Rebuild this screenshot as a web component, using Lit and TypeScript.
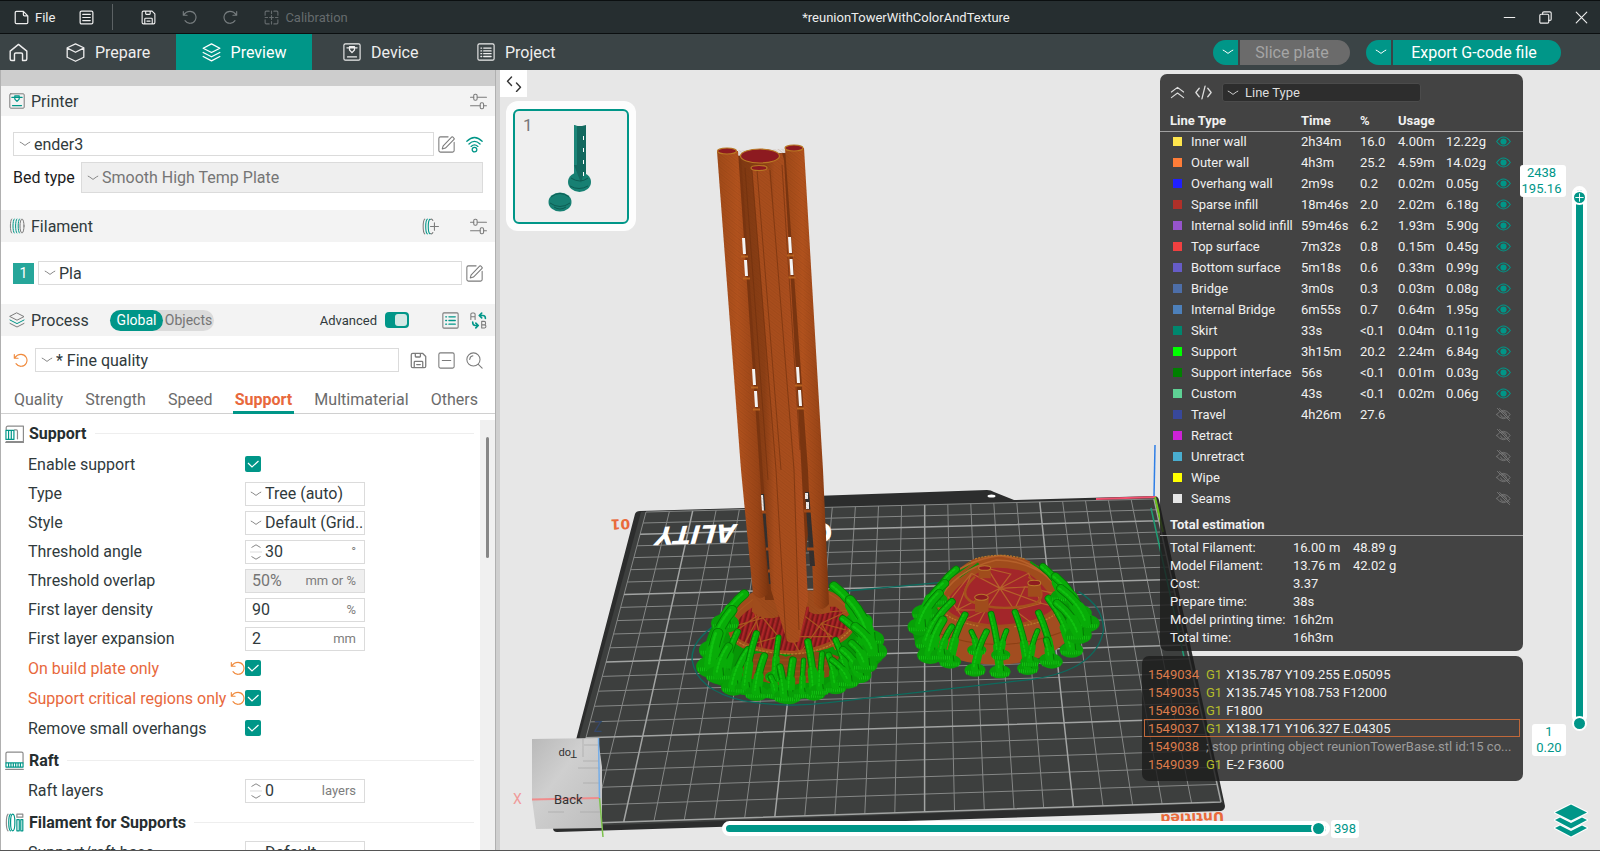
import { LitElement, html, svg, css, nothing } from "lit";
import { customElement, state } from "lit/decorators.js";
import { classMap } from "lit/directives/class-map.js";
import { styleMap } from "lit/directives/style-map.js";

/* ---------- icons ---------- */

const icon = (size: number, body: unknown, box = 16) =>
  html`<svg class="icon" width=${size} height=${size} viewBox="0 0 ${box} ${box}" fill="none" stroke="currentColor" stroke-width="1" stroke-linecap="round" stroke-linejoin="round" aria-hidden="true">${body}</svg>`;

const I = {
  file: svg`<path stroke-width="1.3" d="M2.5 1.5h6.5M1.3 3v10.2q0 1.3 1.3 1.3h10.8q1.3 0 1.3-1.3V6.3L10 1.5H2.6Q1.3 1.5 1.3 3M10 1.5v3.6q0 1.2 1.2 1.2h3.5"/>`,
  menu: svg`<rect x="1.2" y="1.2" width="13.6" height="13.6" rx="1.5" stroke-width="1.3"/><path stroke-width="1.3" d="M4 4.7h8M4 8h8M4 11.3h8"/>`,
  save: svg`<path stroke-width="1.2" d="M1.2 2.6q0-1.4 1.4-1.4h9.2l3 3v9.2q0 1.4-1.4 1.4H2.6q-1.4 0-1.4-1.4zM4 14.8V9.6q0-.8.8-.8h6.4q.8 0 .8.8v5.2M5 1.2v2.9q0 .6.6.6h3.6q.6 0 .6-.6V1.2M6.3 11.8h3.4"/>`,
  undo: svg`<path stroke-width="1.2" d="M1.4 1.6v4h4M1.8 5.4C3.6 2.4 6.2 1.4 8.6 1.4a6.4 6.4 0 1 1-5.4 10"/>`,
  redo: svg`<path stroke-width="1.2" d="M14.6 1.6v4h-4M14.2 5.4C12.4 2.4 9.8 1.4 7.4 1.4a6.4 6.4 0 1 0 5.4 10"/>`,
  calib: svg`<path stroke-width="1.2" d="M1.2 5.5V2.4q0-1.2 1.2-1.2h3.1M10.5 1.2h3.1q1.2 0 1.2 1.2v3.1M14.8 10.5v3.1q0 1.2-1.2 1.2h-3.1M5.500 14.800H2.400q-1.200 0-1.200-1.200v-3.100M8 1.200v2.600M8 12.200v2.600M1.200 8h2.600M12.200 8h2.600M8 6v4M6 8h4"/>`,
  home: svg`<path stroke-width="1.2" d="M1 6.800 8 1.200l7 5.600v6.600q0 1.300-1.300 1.300h-2.300V9.600q0-1.200-1.200-1.200H5.800q-1.200 0-1.200 1.200v5.100H2.300Q1 14.700 1 13.400z"/>`,
  cube: svg`<path stroke-width="1.1" d="M8 .8 15 4v8l-7 3.400L1 12V4zM1.200 4.300 8 7.800l6.800-3.500"/>`,
  layers: svg`<path stroke-width="1.1" d="M8 .8 15 4.400 8 8 1 4.400zM1 8l7 3.600L15 8M1 11.400 8 15l7-3.600"/>`,
  printer: svg`<rect x=".8" y=".8" width="14.400" height="14.400" rx="1.300"/><path stroke-width="1.1" d="M3.500 4.300h9M5.800 3.200h4.400v3L8 8.600 5.800 6.200zM4 12.400h8"/>`,
  list: svg`<rect x=".8" y=".8" width="14.400" height="14.400" rx="1.300"/><path stroke-width="1.200" d="M3.500 4.500h.6M6 4.500h6.500M3.500 7h.6M6 7h6.500M3.500 9.500h.6M6 9.500h6.500M3.500 12h.6M6 12h6.500"/>`,
  printerDuo: svg`<rect x=".8" y=".8" width="14.400" height="14.400" rx="1"/><g stroke="#009688" stroke-width="1.200"><path d="M2.800 4.300h10.400M5.800 2.800h4.400v3.300L8 8.400 5.800 6.100zM3.500 12.600h9"/></g>`,
  sliders: svg`<path d="M.5 4h3M7 4h8.500M.5 12h9M13 12h2.500"/><rect x="3.500" y="1.200" width="3.200" height="5.600" rx="1.300"/><rect x="9.600" y="9.200" width="3.200" height="5.600" rx="1.300"/>`,
  spool: svg`<path d="M2.600 1C.9 2.600.9 13.400 2.600 15"/><g stroke="#009688"><path d="M5.200 1C3.500 2.600 3.500 13.400 5.200 15M7.800 1C6.100 2.600 6.100 13.400 7.800 15M10.400 1C8.700 2.600 8.700 13.400 10.400 15"/></g><ellipse cx="13" cy="8" rx="2" ry="7"/>`,
  spoolAdd: svg`<path d="M2.600 1C.6 2.600.6 13.400 2.600 15M8 1.300q1.300-.8 2.200 1M8 14.700q1.300.8 2.200-1M8 8h7.500M11.700 4.500v7"/><path stroke="#009688" d="M5 1C3 2.600 3 13.400 5 15M7.400 1.200C5.400 2.600 5.400 13.400 7.400 14.800"/>`,
  edit: svg`<path d="M9.500.8H2.300Q.8.800.8 2.300v11.400q0 1.500 1.500 1.500h11.400q1.500 0 1.500-1.500V6M13.800.9l1.300 1.300q.5.500 0 1L7 11.300l-3 .9.900-3L13 .9q.4-.4.800 0z"/>`,
  wifi: svg`<g stroke="#009688" stroke-width="1.200"><path d="M.8 5Q8-2.200 15.200 5M2.800 7.500q5.200-5 10.400 0M4.800 9.800q3.200-3 6.400 0"/><circle cx="8" cy="12.800" r="2.200"/></g>`,
  processDuo: svg`<path d="M8 1 15 4.600 8 8.200 1 4.600z"/><path stroke="#009688" d="m1 8 7 3.600L15 8"/><path d="m1 11.400 7 3.600 7-3.600"/>`,
  listDuo: svg`<rect x=".8" y=".8" width="14.400" height="14.400" rx="1"/><path stroke="#009688" stroke-width="1.200" d="M3.500 4.500h.8M6.500 4.500h6M3.500 8h.8M6.500 8h6M3.500 11.500h.8M6.500 11.500h6"/>`,
  swap: svg`<path d="M.8 7V2.200Q.8 1 2 1h1.600q1.200 0 1.200 1.200V7M.8 4.400h4M11 8.800v6.200h2.800q1.200 0 1.200-1.500 0-1.400-1.400-1.400H11h2.400q1.300 0 1.300-1.600 0-1.700-1.300-1.700z"/><path stroke="#009688" stroke-width="1.500" d="M9 3.300h3.200Q14.500 3.300 14.500 6M11 1 8.700 3.300 11 5.500M2.500 9.500q0 3.200 2.500 3.200h2.300M5.500 10.500l2.300 2.200-2.300 2.300"/>`,
  minusBox: svg`<rect x=".8" y=".8" width="14.400" height="14.400" rx="1.500"/><path d="M4 8h8"/>`,
  search: svg`<circle cx="7" cy="7" r="6.200"/><path d="m11.600 11.600 3.600 3.600M3.500 7q.2-3 3-3.500"/>`,
  supportSec: svg`<path d="M1 14.800h14.500v-13H2.500Q1 1.800 1 3.300v1.500M10.500 12.500V6q0-1-1-1H8M.6 15.500h15" /><path stroke="#009688" d="M.8 13V5.400h6.700V13zM3 5.400V13M5.300 5.400V13"/>`,
  raftSec: svg`<path d="M.8 9.800V2.200Q.8 1 2 1h12q1.200 0 1.200 1.200v7.600M.6 15.500h14.800"/><path stroke="#009688" d="M.8 10h14.400v3.500H.8zM3 10v3.500M5 10v3.500M7 10v3.500M9 10v3.500M11 10v3.500M13 10v3.500"/>`,
  filSec: svg`<path d="M2.500 1C.7 2.600.7 13.400 2.500 15M10 1h5v2.500h-5z"/><g stroke="#009688"><path d="M4.500 1C2.700 2.600 2.700 13.400 4.500 15"/><ellipse cx="6.500" cy="8" rx="1.800" ry="7"/><path d="M10 5.500h2V15h-2zM13.300 5.500H15V15h-1.700z"/></g>`,
  min: svg`<path stroke-width="1.300" d="M1.500 8h13"/>`,
  restore: svg`<rect x="1" y="4" width="11" height="11" rx="1.500" stroke-width="1.400"/><path stroke-width="1.400" d="M4.500 4V2.500Q4.500 1 6 1h7.500Q15 1 15 2.500V10q0 1.500-1.500 1.500H12"/>`,
  close: svg`<path stroke-width="1.400" d="m1.500 1.500 13 13M14.500 1.500l-13 13"/>`,
  collapse: svg`<path stroke-width="1.200" d="m1.500 7.500 6.500-5 6.500 5M1.500 13.500l6.500-5 6.500 5"/>`,
  code: svg`<path stroke-width="1.200" d="M4 4 .8 8 4 12M12 4l3.200 4-3.200 4M9.500 2l-3 12"/>`,
  eye: svg`<path stroke-width="1.100" d="M.7 8Q8-1.500 15.300 8 8 17.500.7 8z"/><circle cx="8" cy="8" r="3.300" fill="currentColor" stroke="none"/>`,
  eyeOff: svg`<path d="M.7 8Q8-1 15.300 8 8 17 .7 8zM1.500 1.500l13 13M5 8.500a3 3 0 0 0 4 2.500M6 5.500a3.200 3.200 0 0 1 5 3M3.800 1.500l10.700 10.700"/>`,
  fold: svg`<path stroke-width="1.400" stroke="#333" d="M5.500 1 1.500 5.300l4 4.200M10.500 7l4 4.200-4 4.300"/>`,
};

const chevron = html`<svg class="chev" width="12" height="6" viewBox="0 0 12 6" fill="none" stroke="currentColor" aria-hidden="true"><path d="M.8 1 Q2 1.300 6 4.400Q10 1.300 11.200 1"/></svg>`;
const spin = html`<svg class="spin" width="12" height="18" viewBox="0 0 12 18" fill="none" stroke="#888" aria-hidden="true"><path d="M1.500 4.500 6 1.800l4.500 2.700M1.500 13.500 6 16.200l4.500-2.700"/><path stroke="#ddd" d="M0 9h12"/></svg>`;

/* ---------- bed projection ---------- */

type P = [number, number];
const [A, B, C, D]: P[] = [[646, 512], [1154, 499], [1221, 802], [563, 824]];
const H = (() => {
  const dx1 = B[0] - C[0], dx2 = D[0] - C[0], sx = A[0] - B[0] + C[0] - D[0];
  const dy1 = B[1] - C[1], dy2 = D[1] - C[1], sy = A[1] - B[1] + C[1] - D[1];
  const det = dx1 * dy2 - dx2 * dy1;
  const g = (sx * dy2 - dx2 * sy) / det, h = (dx1 * sy - sx * dy1) / det;
  return { a: B[0] - A[0] + g * B[0], b: D[0] - A[0] + h * D[0], d: B[1] - A[1] + g * B[1], e: D[1] - A[1] + h * D[1], g, h };
})();
const onBed = (u: number, v: number): string => {
  const w = H.g * u + H.h * v + 1;
  return `${((H.a * u + H.b * v + A[0]) / w).toFixed(1)} ${((H.d * u + H.e * v + A[1]) / w).toFixed(1)}`;
};
const CELLS = 22;
const gridPath = (major: boolean) => {
  let d = "";
  for (let i = 0; i <= CELLS; i++) {
    const t = i / CELLS;
    if ((i % 5 === 2) === major) d += `M${onBed(t, 0)}L${onBed(t, 1)}`;
    if ((i % 5 === 2) === major) d += `M${onBed(0, t)}L${onBed(1, t)}`;
  }
  return d;
};

/* ---------- printed models ---------- */

type Trunk = [number, number, number, number, number];
const TREES_TOWER: Trunk[] = [
  [404, 402, 350, 480, 26], [370, 450, 318, 560, 28], [330, 520, 312, 610, 30], [655, 378, 725, 475, 26], [700, 420, 755, 530, 28],
  [680, 476, 758, 575, 20], [715, 500, 765, 565, 26], [385, 515, 352, 635, 18], [360, 560, 332, 635, 24], [415, 570, 374, 672, 22], [438, 520, 408, 675, 18],
  [460, 588, 438, 690, 20], [500, 532, 490, 640, 15], [478, 650, 492, 690, 16], [540, 600, 530, 700, 20], [504, 620, 516, 700, 18], [582, 545, 600, 690, 19],
  [622, 580, 616, 680, 15], [570, 600, 566, 690, 13], [640, 585, 660, 672, 18], [660, 540, 690, 648, 17], [680, 570, 725, 635, 22], [705, 550, 742, 605, 22], [650, 600, 695, 655, 18],
];
const TREES_DOME: Trunk[] = [
  [997, 328, 940, 410, 20], [965, 370, 910, 450, 24], [950, 400, 898, 490, 24], [985, 425, 915, 540, 20], [960, 480, 925, 575, 24],
  [1022, 464, 980, 595, 18], [985, 500, 955, 575, 17], [1040, 515, 1055, 560, 14], [1082, 515, 1050, 620, 17], [1095, 462, 1120, 625, 17], [1138, 512, 1122, 575, 14],
  [1162, 456, 1198, 615, 17], [1225, 512, 1204, 595, 14], [1228, 458, 1265, 595, 18], [1250, 540, 1260, 590, 18], [1256, 415, 1320, 560, 20],
  [1240, 320, 1295, 400, 20], [1275, 350, 1340, 450, 24], [1290, 385, 1362, 480, 24], [1280, 430, 1340, 515, 24],
];
const bend = ([x1, y1, x2, y2]: Trunk, dx = 0) =>
  `M${x1 + dx} ${y1}Q${x1 + (x2 - x1) * 0.75 + dx} ${y1 + (y2 - y1) * 0.45} ${x2 + dx} ${y2}`;
const trees = (list: Trunk[]) => list.map((t) => {
  const [x1, y1, x2, y2, w] = t;
  const mx = x1 + (x2 - x1) * 0.7, my = y1 + (y2 - y1) * 0.6;
  return svg`
  <ellipse cx=${x2} cy=${y2 + 10} rx=${w + 13} ry=${w + 3} fill="#08a008"/>
  <path d="M${x2 - w - 8} ${y2 + 18}h${2 * w + 16}" stroke="#16cc16" stroke-width="11" stroke-dasharray="2 4"/>
  <path d=${bend(t)} stroke="#057805" stroke-width=${w + 2} stroke-linecap="round"/>
  <path d=${bend(t)} stroke="#08ac08" stroke-width=${w - 3} stroke-linecap="round"/>
  <path d="M${mx} ${my}L${x2} ${y2 + 4}" stroke="#08ac08" stroke-width=${w * 1.4} stroke-linecap="round"/>
  <path d=${bend(t, -w / 5)} stroke="#10c210" stroke-width=${w / 4} stroke-linecap="round" stroke-dasharray="7 6"/>
  <path d="M${x2 + w / 2} ${y2 - w / 2}l2 ${w}" stroke="#057a05" stroke-width="3"/>`;
});

const slits: [number, number][] = [[742, 238], [744, 260], [788, 237], [789.500, 259], [752, 369], [754, 391], [796, 367], [798, 390]];

const scene = svg`
  <defs>
    <linearGradient id="post" x1="0" x2="1" y1="0" y2="0"><stop offset="0" stop-color="#a04a18"/><stop offset=".4" stop-color="#b3531e"/><stop offset=".8" stop-color="#9a4517"/><stop offset="1" stop-color="#7d3610"/></linearGradient>
    <linearGradient id="core" x1="0" x2="1" y1="0" y2="0"><stop offset="0" stop-color="#7f3912"/><stop offset=".35" stop-color="#8c3f15"/><stop offset=".5" stop-color="#a94e1d"/><stop offset="1" stop-color="#b05020"/></linearGradient>
    <linearGradient id="cube" x1="0" x2="1" y1="0" y2="1"><stop offset="0" stop-color="#b9b9b9"/><stop offset=".4" stop-color="#cfcfcf"/><stop offset="1" stop-color="#bdbdbd"/></linearGradient>
    <pattern id="grain" width="5" height="5" patternUnits="userSpaceOnUse" patternTransform="rotate(38)"><path d="M0 1h5M0 3.500h5" stroke="#6f300e" stroke-opacity=".22" stroke-width=".8"/></pattern>
    <pattern id="infill" width="13" height="40" patternUnits="userSpaceOnUse" patternTransform="rotate(14)"><path fill="#9d1f22" d="M0 0h13v40H0z"/><path d="M3 0v40" stroke="#6e1414" stroke-width="4"/><path d="M9 0v40" stroke="#bb2a2c" stroke-width="2"/></pattern>
  </defs>

  <path fill="#2c2d2d" d="M812 506 814 496 987 490Q991 490 994 492L1014 500 1154 496Q1158 496 1159 500L1225 806Q1225 810 1221 811L557 832Q553 832 553 828L635 514Q636 511 640 511z"/>
  <path fill="#3d3f3e" d="M641 512 1154 498 1223 803 555 827z"/>
  <ellipse cx="991.500" cy="496" rx="4" ry="1.600" fill="#fff"/>
  <path d=${gridPath(false)} stroke="#858786" stroke-width="1" fill="none"/>
  <path d=${gridPath(true)} stroke="#a2a4a3" stroke-width="1.500" fill="none"/>
  <path d="M1155 445 1154 497" stroke="#2f7fe6" stroke-width="1.500"/>
  <path d="M1096 499 1156 497" stroke="#f0506e" stroke-width="1.800"/>
  <path d="M1155 497 1163 532" stroke="#6fc21e" stroke-width="2"/>
  <path d="M1151 508 1184 657" stroke="#1f9d74" stroke-width="1.500"/>
  <g fill="#fff" class="bedmark">
    <text transform="translate(738 524) rotate(178) skewX(-18)">ALITY</text>
    <text transform="translate(832 523) rotate(178)">C</text>
  </g>
  <g fill="#e96a3b" class="platelabel">
    <text transform="translate(630 519) rotate(178)">01</text>
    <text transform="translate(1224 812) rotate(178)">Untitled</text>
  </g>

  <g transform="translate(600 460) scale(.35714 .33333)" fill="none">
    <path d="M330 490Q255 540 258 600 270 690 400 722 520 745 640 728L1210 658Q1390 630 1410 510 1410 440 1340 395M660 396 950 368" stroke="#0d6b5e" stroke-width="4"/>
    <path fill="#079607" d="M404 392Q325 450 298 540L288 610 320 670 420 710 520 720 640 700 735 655 790 600 785 550 745 465 655 368 560 500z"/>
    <path fill="#8a4517" d="M385 600Q460 560 520 590 600 560 670 590L640 650 520 680 400 650z"/>
    <g stroke="#9b4a1a" stroke-width="5"><path d="M395 600h270M410 618h240M430 634h200M445 650h180M470 666h120"/></g>
    <path fill="#a04c1c" d="M440 390Q380 420 356 480 352 540 400 565 540 600 640 565 710 540 722 480 690 410 640 392z"/>
    <path fill="url(#infill)" d="M430 440Q380 470 372 520 400 560 520 575 640 565 692 510 700 470 660 440z"/>
    <g stroke="#a9561f" stroke-width="3.500"><path d="M372 520 450 460 400 560 500 530 430 440 455 570 545 575M372 500 500 460 560 580 620 490 690 510M600 460 700 450 620 490 660 570M575 470 650 530 560 530M360 480Q400 440 450 400M720 480Q690 430 640 400"/></g>
    <path stroke="#b8772b" stroke-width="4" stroke-dasharray="7 3" d="M366 530Q420 580 540 582 650 575 705 505"/>
    <path fill="#a04c1c" d="M430 395Q470 380 500 395L500 470Q460 485 425 455zM585 400 640 395 645 455Q610 470 585 455z"/>
    ${trees(TREES_TOWER)}

    <path fill="#079607" d="M1000 322Q930 380 885 460L872 500 885 560 920 590 965 520 960 470 1010 380zM1240 312 1335 420 1385 490 1372 520 1340 560 1290 500z"/>
    <path fill="#a24d20" d="M955 470 930 560Q990 612 1110 614 1240 612 1305 545L1290 460z"/>
    <path stroke="#8b3f14" stroke-width="3" d="M948 520Q1110 590 1296 515M975 590 995 530M1060 610 1050 550M1180 610 1190 545M1270 580 1245 530"/>
    <path fill="#a04c1c" d="M1045 298Q960 350 940 430 945 490 1120 503 1290 490 1300 430 1270 330 1190 298 1120 275 1045 298z"/>
    <path stroke="#0b8f0b" stroke-width="6" d="M985 350 1040 308M1005 352 1060 310M1205 305 1260 350"/>
    <path fill="#a3262a" d="M1085 325Q990 370 965 440 1000 490 1120 494 1230 490 1275 440 1250 370 1190 335 1130 318 1085 325z"/>
    <g stroke="#b5602a" stroke-width="3.500"><path d="M965 440 1040 340 1000 450 1120 385 1085 325 1150 342 1120 385 1200 340 1235 430 1275 440M1120 385 1235 430 1160 450 1120 385 1080 450 1000 450M1040 340 1120 385 1210 380M1160 450 1210 490M1080 450 1060 490M975 410 1020 480 1080 450M1270 400 1190 380 1160 450"/><path d="M1050 350Q1000 400 1040 425 1120 460 1220 430 1260 400 1200 350" stroke="#a5521d" stroke-width="7"/><path stroke-width="5" d="M960 370Q1020 300 1120 287 1230 300 1290 400M945 430Q990 330 1110 300 1200 300 1280 370"/></g>
    <path stroke="#b8772b" stroke-width="4" stroke-dasharray="6 3" d="M942 430Q960 480 1060 498M1160 500Q1270 490 1300 432M1050 297Q1120 275 1190 297"/>
    <g fill="#a04c1c"><path d="M1050 412v45h38v-45zM1198 370v40h36v-40zM1060 325v30h34v-30z"/></g>
    <g fill="#8f1c20" stroke="#b8772b" stroke-width="3"><ellipse cx="1068" cy="412" rx="19" ry="9"/><ellipse cx="1216" cy="369" rx="18" ry="8"/><ellipse cx="1077" cy="324" rx="17" ry="7"/></g>
    ${trees(TREES_DOME)}
  </g>

  <path fill="#7a3510" d="M733 156 800 152 812 500 800 600 765 600z"/>
  <path fill="url(#post)" d="M717 151 738 151 768 594Q760 602 753 594L741 470z"/>
  <path fill="url(#post)" d="M785 148 804 148 823 470 829 604Q821 614 814 604L808 470z"/>
  <path fill="#2f2f30" d="M761 494l3 0 8 90-3 0zM805 492l4 0 6 74-5 0z"/>
  <path fill="#f2f2f2" d="M761 495h2l1 16h-2zM805 493h3v6h-3zM806 502h3v7h-3z"/>
  <g stroke="#a34b18" stroke-width="3"><path d="M762 512h7M804 511h8M766 549h6M807 549h8M768 571h6"/></g>
  <path fill="url(#core)" d="M741 155Q760 166 782 153L784 160 801 460 808 600 799 641Q793 644 787 641L771 590 762 460z"/>
  <path fill="#a94e1d" d="M752 169 769 169 795 470 799 641Q793 644 787 641L776 470z"/>
  <g fill="none" stroke="#6d2f0d" stroke-opacity=".6"><path d="M752 170 776 470 786 640M757 170 781 470M770 170 794 470 799 630M782 165 800 450M745 168 768 480"/></g>
  <path fill="url(#grain)" d="M717 151 804 148 823 470 829 604 799 641 787 641 753 594 741 470z"/>
  <g fill="#8d1a20" stroke="#b87824" stroke-width="1.200"><ellipse cx="727" cy="151" rx="9.500" ry="3"/><ellipse cx="760" cy="156" rx="19.500" ry="7"/><ellipse cx="794" cy="148" rx="9" ry="3"/><ellipse cx="759" cy="168" rx="8" ry="2.500"/></g>
  ${slits.map(([x, y]) => svg`<path fill="#f4f4f4" d="M${x} ${y}h3l1 16h-3z"/><path d="M${x - 1} ${y + 18.500}h7" stroke="#b8631f" stroke-width="2"/>`)}

  <path fill="url(#cube)" d="M532 739 598 738 602 767V828L536 829 532 799z"/>
  <path stroke="#a8a8a8" stroke-width=".7" d="M583 739v18M583 761h16M578 768h22M583 783h17M548 812h16M580 812h20M598 745h-14"/>
  <path stroke="#f08c8c" stroke-width="2" d="M532 799.500 599 798"/>
  <path stroke="#76aee8" stroke-width="1.500" d="M598.500 738 599.500 798"/>
  <path stroke="#7cc24c" stroke-width="1.500" d="M599.500 798 603 837"/>
  <g class="axis"><text x="513" y="804" fill="#f09a9a">X</text><text x="594" y="732" fill="#33476b">Z</text></g>
  <g class="face" fill="#333"><text x="554" y="804">Back</text><text class="top" transform="translate(577 750) rotate(180)">Top</text></g>
`;

/* ---------- data ---------- */

type Line = [string, string, string?, string?, string?, string?];
const LINES: Line[] = [
  ["#ffe64d", "Inner wall", "2h34m", "16.0", "4.00m", "12.22g"],
  ["#ff7d38", "Outer wall", "4h3m", "25.2", "4.59m", "14.02g"],
  ["#1f1fff", "Overhang wall", "2m9s", "0.2", "0.02m", "0.05g"],
  ["#b03029", "Sparse infill", "18m46s", "2.0", "2.02m", "6.18g"],
  ["#9654cc", "Internal solid infill", "59m46s", "6.2", "1.93m", "5.90g"],
  ["#f04040", "Top surface", "7m32s", "0.8", "0.15m", "0.45g"],
  ["#665cc7", "Bottom surface", "5m18s", "0.6", "0.33m", "0.99g"],
  ["#4d6ea8", "Bridge", "3m0s", "0.3", "0.03m", "0.08g"],
  ["#4d80ba", "Internal Bridge", "6m55s", "0.7", "0.64m", "1.95g"],
  ["#00876e", "Skirt", "33s", "<0.1", "0.04m", "0.11g"],
  ["#00ff00", "Support", "3h15m", "20.2", "2.24m", "6.84g"],
  ["#008000", "Support interface", "56s", "<0.1", "0.01m", "0.03g"],
  ["#5ed194", "Custom", "43s", "<0.1", "0.02m", "0.06g"],
  ["#38489b", "Travel", "4h26m", "27.6"],
  ["#cd22d6", "Retract"],
  ["#49adcf", "Unretract"],
  ["#ffff00", "Wipe"],
  ["#e6e6e6", "Seams"],
];
const TOTALS: [string, string, string?][] = [
  ["Total Filament:", "16.00 m", "48.89 g"],
  ["Model Filament:", "13.76 m", "42.02 g"],
  ["Cost:", "3.37"],
  ["Prepare time:", "38s"],
  ["Model printing time:", "16h2m"],
  ["Total time:", "16h3m"],
];
const GCODE: [string, string, string][] = [
  ["1549034", "G1", "X135.787 Y109.255 E.05095"],
  ["1549035", "G1", "X135.745 Y108.753 F12000"],
  ["1549036", "G1", "F1800"],
  ["1549037", "G1", "X138.171 Y106.327 E.04305"],
  ["1549038", "", "; stop printing object reunionTowerBase.stl id:15 co..."],
  ["1549039", "G1", "E-2 F3600"],
];

interface Field { id: string; label: string; kind: "check" | "select" | "spin" | "text"; value?: string; unit?: string; dirty?: boolean; off?: boolean; }
const SECTIONS: { title: string; glyph: unknown; fields: Field[] }[] = [
  { title: "Support", glyph: I.supportSec, fields: [
    { id: "enable", label: "Enable support", kind: "check" },
    { id: "type", label: "Type", kind: "select", value: "Tree (auto)" },
    { id: "style", label: "Style", kind: "select", value: "Default (Grid..." },
    { id: "angle", label: "Threshold angle", kind: "spin", value: "30", unit: "°" },
    { id: "overlap", label: "Threshold overlap", kind: "text", value: "50%", unit: "mm or %", off: true },
    { id: "density", label: "First layer density", kind: "text", value: "90", unit: "%" },
    { id: "expansion", label: "First layer expansion", kind: "text", value: "2", unit: "mm" },
    { id: "plate", label: "On build plate only", kind: "check", dirty: true },
    { id: "critical", label: "Support critical regions only", kind: "check", dirty: true },
    { id: "overhangs", label: "Remove small overhangs", kind: "check" },
  ] },
  { title: "Raft", glyph: I.raftSec, fields: [{ id: "raft", label: "Raft layers", kind: "spin", value: "0", unit: "layers" }] },
  { title: "Filament for Supports", glyph: I.filSec, fields: [{ id: "base", label: "Support/raft base", kind: "select", value: "Default" }] },
];

const base = css`
  *, :host { box-sizing: border-box; }
  button, input, select { font: inherit; color: inherit; margin: 0; }
  button { background: none; border: 0; padding: 0; display: inline-flex; align-items: center; justify-content: center; }
  a { color: inherit; text-decoration: none; }
  select { appearance: none; border: 0; background: none; padding: 0; outline: 0; flex: 1; min-width: 0; width: 100%; text-overflow: ellipsis; opacity: 1; }
  .icon { display: block; flex: none; }
  .chev { flex: none; color: #888; }
`;

/* ---------- top bars ---------- */

@customElement("top-bars")
class TopBars extends LitElement {
  static styles = [base, css`
    :host { display: block; color: #eee; }
    .title { display: flex; align-items: center; height: 34px; background: #262e30; border: 1px solid #0b0f10; border-width: 1px 0; padding: 0 12px 0 14px; font-size: 13px; }
    .title button { height: 32px; gap: 6px; }
    .left { display: flex; align-items: center; width: 336px; }
    .m1 { margin-left: 24px; } .m2 { margin-left: 28px; } .m3 { margin-left: 26px; }
    .sep { width: 1px; height: 26px; background: #5c6264; margin-left: 18px; }
    .dim { color: #777d7f; }
    .faint { color: #656b6d; }
    .name { flex: 1; text-align: center; }
    .right { display: flex; gap: 23px; width: 126px; justify-content: flex-end; }
    .nav { display: flex; align-items: center; height: 36px; background: #3b4446; font-size: 16px; padding-right: 39px; }
    .tab { display: flex; align-items: center; gap: 10px; height: 36px; }
    .home { padding: 0 20px 0 9px; }
    .prepare { padding: 0 26px 0 18px; width: 128px; }
    .preview { width: 136px; justify-content: center; gap: 10px; background: #009688; color: #fff; }
    .device { width: 134px; padding-left: 31px; }
    .project { padding-left: 31px; }
    .grow { flex: 1; }
    .split { display: flex; gap: 2px; margin-left: 16px; height: 25px; }
    .split button { background: #009688; color: #fff; }
    .arrow { width: 25px; border-radius: 13px 0 0 13px; padding-left: 4px !important; }
    .arrow .chev { color: #fff; }
    .split .slice { width: 110px; border-radius: 0 13px 13px 0; background: #6b6b6b; color: #a5a5a5; padding-right: 6px; }
    .export { width: 168px; border-radius: 0 13px 13px 0; padding-right: 6px; }
  `];
  render() {
    return html`
      <header class="title">
        <div class="left">
          <button>${icon(15, I.file)}File</button>
          <button class="m1" aria-label="Menu">${icon(15, I.menu)}</button>
          <span class="sep"></span>
          <button class="m2" aria-label="Save">${icon(15, I.save)}</button>
          <button class="m3 dim" aria-label="Undo">${icon(15, I.undo)}</button>
          <button class="m3 dim" aria-label="Redo">${icon(15, I.redo)}</button>
          <button class="m3 faint">${icon(15, I.calib)}Calibration</button>
        </div>
        <div class="name">*reunionTowerWithColorAndTexture</div>
        <div class="right">
          <button aria-label="Minimize">${icon(13, I.min)}</button>
          <button aria-label="Restore">${icon(13, I.restore)}</button>
          <button aria-label="Close">${icon(13, I.close)}</button>
        </div>
      </header>
      <nav class="nav">
        <a class="tab home" href="#home" aria-label="Home">${icon(19, I.home)}</a>
        <a class="tab prepare" href="#prepare">${icon(19, I.cube)}Prepare</a>
        <a class="tab preview" href="#preview">${icon(19, I.layers)}Preview</a>
        <a class="tab device" href="#device">${icon(18, I.printer)}Device</a>
        <a class="tab project" href="#project">${icon(18, I.list)}Project</a>
        <span class="grow"></span>
        <div class="split"><button class="arrow" aria-label="Slice options">${chevron}</button><button class="slice" disabled>Slice plate</button></div>
        <div class="split"><button class="arrow" aria-label="Export options">${chevron}</button><button class="export">Export G-code file</button></div>
      </nav>`;
  }
}

/* ---------- settings sidebar ---------- */

@customElement("settings-panel")
class SettingsPanel extends LitElement {
  static styles = [base, css`
    :host { display: flex; flex-direction: column; width: 496px; flex: none; min-height: 0; background: #fff; border: 1px solid #b0b0b0; border-width: 0 1px; color: #303a3c; font-size: 16px; }
    .strip { height: 16px; background: #cdcdcd; flex: none; }
    .head { display: flex; align-items: center; height: 32px; flex: none; background: #f3f3f3; padding: 0 8px; gap: 6px; color: #7b7b7b; }
    .head.first { height: 30px; }
    .head h2 { font-size: 16px; font-weight: 400; margin: 0; flex: 1; color: #303a3c; }
    .acts { display: flex; gap: 31px; }
    .body { padding: 16px 12px 17px; display: grid; gap: 6px; flex: none; }
    .body.fil { padding: 19px 12px; }
    .body.proc { padding: 12px 12px 11px; }
    .row { display: flex; align-items: center; gap: 4px; color: #7b7b7b; }
    .pair { display: flex; gap: 11px; }
    .box { display: flex; align-items: center; gap: 3px; height: 24px; border: 1px solid #dbdbdb; background: #fff; padding: 0 4px 0 5px; flex: 1; min-width: 0; color: #303a3c; }
    .tall { height: 31px; }
    .off { background: #efefef; color: #757575; }
    .row label { color: #1c1c1c; white-space: nowrap; width: 64px; }
    .badge { width: 21px; height: 21px; background: #26a69a; color: #fff; font-size: 14px; display: grid; place-items: center; }
    .seg { display: flex; background: #dbdbdb; border-radius: 11px; height: 21px; font-size: 14px; color: #757575; }
    .seg button { width: 51px; }
    .seg .on { background: #009688; color: #fff; border-radius: 11px; width: 53px; }
    .head .title { flex: none; width: 73px; }
    .gap { flex: 1; }
    .adv { display: flex; align-items: center; gap: 8px; font-size: 13px; color: #303a3c; }
    .switch { appearance: none; width: 24px; height: 16px; border-radius: 4px; background: #009688; padding: 2px; display: flex; justify-content: flex-end; }
    .switch::after { content: ""; width: 12px; height: 12px; border-radius: 3px; background: #d3e8e5; }
    .tools { gap: 11px; margin-left: 27px; }
    .undo { color: #f08a3c; }
    .qual { gap: 11px; }
    .qual .undo { margin-right: -4px; }
    .tabs { display: flex; justify-content: space-between; padding: 0 17px 0 13px; border-bottom: 1px solid #d0d0d0; flex: none; height: 31px; color: #6b6b6b; }
    .tabs a { height: 31px; line-height: 34px; }
    .tabs .cur { color: #e8683c; font-weight: 700; border-bottom: 3px solid #009688; padding: 0 2px; margin: 0 -2px; }
    .scroll { flex: 1; min-height: 0; display: flex; overflow: hidden; }
    .list { flex: 1; padding: 4px 6px 0 4px; display: flex; flex-direction: column; gap: 2px; }
    .sec { display: flex; align-items: center; height: 31px; gap: 5px; color: #8b8b8b; }
    .sec h3 { font-size: 16px; margin: 0; color: #262e30; }
    .sec hr { flex: 1; border: 0; border-top: 1px solid #eee; margin: 0 0 0 3px; }
    .field { display: grid; grid-template-columns: 202px 15px 120px; align-items: center; height: 29px; padding-left: 23px; }
    .field.check { height: 30px; }
    .dirty { color: #e8683c; }
    .field label { white-space: nowrap; }
    .field .box { padding: 0 0 0 4px; }
    .field .box.plain { padding-left: 6px; }
    .field select { text-overflow: clip; }
    .field input[type="text"] { border: 0; background: none; outline: 0; padding: 0; width: 40px; flex: 1; min-width: 0; }
    .unit { font-size: 13px; color: #7d7d7d; padding-right: 8px; white-space: nowrap; }
    .tick { display: grid; width: 16px; height: 16px; }
    .tick > * { grid-area: 1 / 1; }
    .tick input { appearance: none; width: 16px; height: 16px; border-radius: 2px; background: #009688; }
    .tick svg { pointer-events: none; }
    .track { width: 15px; margin-top: 6px; background: #f0f0f0; display: flex; justify-content: center; padding-top: 17px; }
    .thumb { width: 3px; height: 121px; border-radius: 2px; background: #868686; }
  `];

  private control(f: Field) {
    if (f.kind === "check") return html`<span class="tick"><input id=${f.id} type="checkbox" checked /><svg width="16" height="16" viewBox="0 0 16 16" fill="none" stroke="#fff" stroke-width="1.200"><path d="m3 7 4 4 6.500-6"/></svg></span>`;
    if (f.kind === "select") return html`<span class="box">${chevron}<select id=${f.id}><option>${f.value}</option></select></span>`;
    return html`<span class=${classMap({ box: true, plain: f.kind === "text", off: !!f.off })}>
      ${f.kind === "spin" ? spin : nothing}<input id=${f.id} type="text" .value=${f.value ?? ""} ?disabled=${!!f.off} /><span class="unit">${f.unit}</span></span>`;
  }

  render() {
    return html`
      <div class="strip"></div>
      <div class="head first">${icon(16, I.printerDuo)}<h2>Printer</h2>${icon(17, I.sliders)}</div>
      <div class="body">
        <div class="row"><span class="box">${chevron}<select aria-label="Printer"><option>ender3</option></select></span>
          <span class="pair">${icon(17, I.edit)}${icon(17, I.wifi)}</span></div>
        <div class="row"><label for="bed">Bed type</label><span class="box tall off">${chevron}<select id="bed" disabled><option>Smooth High Temp Plate</option></select></span></div>
      </div>
      <div class="head">${icon(16, I.spool)}<h2>Filament</h2><span class="acts">${icon(17, I.spoolAdd)}${icon(17, I.sliders)}</span></div>
      <div class="body fil">
        <div class="row"><button class="badge">1</button><span class="box">${chevron}<select aria-label="Filament 1"><option>Pla</option></select></span>${icon(17, I.edit)}</div>
      </div>
      <div class="head">${icon(16, I.processDuo)}<h2 class="title">Process</h2>
        <span class="seg"><button class="on">Global</button><button>Objects</button></span><span class="gap"></span>
        <label class="adv">Advanced<input class="switch" type="checkbox" role="switch" checked /></label>
        <span class="acts tools">${icon(17, I.listDuo)}${icon(17, I.swap)}</span></div>
      <div class="body proc">
        <div class="row qual"><button class="undo" aria-label="Reset">${icon(15, I.undo)}</button><span class="box">${chevron}<select aria-label="Process preset"><option>* Fine quality</option></select></span>
          ${icon(17, I.save)}${icon(17, I.minusBox)}${icon(17, I.search)}</div>
      </div>
      <nav class="tabs">
        ${["Quality", "Strength", "Speed", "Support", "Multimaterial", "Others"].map((t) => html`<a href="#${t}" class=${classMap({ cur: t === "Support" })}>${t}</a>`)}
      </nav>
      <div class="scroll">
        <div class="list">
          ${SECTIONS.map((s) => html`<section>
            <div class="sec">${icon(19, s.glyph)}<h3>${s.title}</h3><hr /></div>
            ${s.fields.map((f) => html`<div class=${classMap({ field: true, check: f.kind === "check" })}>
              <label for=${f.id} class=${classMap({ dirty: !!f.dirty })}>${f.label}</label>
              <span class="undo">${f.dirty ? icon(15, I.undo) : nothing}</span>${this.control(f)}</div>`)}
          </section>`)}
        </div>
        <div class="track"><span class="thumb"></span></div>
      </div>`;
  }
}

/* ---------- 3D view ---------- */

@customElement("preview-canvas")
class PreviewCanvas extends LitElement {
  @state() private top = 2438;
  static styles = [base, css`
    :host { display: block; flex: 1; position: relative; min-width: 0; background: #e7e7e7; overflow: hidden; font-size: 13px; }
    .scene { position: absolute; inset: 0; width: 100%; height: 100%; }
    .bedmark { font: 700 25px "DejaVu Sans", sans-serif; }
    .platelabel { font: 700 14px "DejaVu Sans", sans-serif; }
    .axis { font-size: 14px; }
    .face { font-size: 13px; }
    .face .top { font-size: 11px; }
    .toggle { position: absolute; left: 0; top: 0; width: 27px; height: 27px; background: #fff; }
    .plate { position: absolute; left: 6px; top: 31px; width: 130px; height: 130px; background: #fdfdfd; border-radius: 12px; padding: 8px 7px 7px; }
    .plate button { width: 116px; height: 115px; border: 2px solid #009688; border-radius: 6px; background: #efefef; position: relative; display: block; }
    .num { position: absolute; left: 8px; top: 4px; font-size: 17px; color: #777; }
    .plate svg { display: block; width: 112px; height: 111px; }
    .side { position: absolute; right: 77px; top: 4px; display: flex; flex-direction: column; align-items: flex-end; gap: 5px; }
    .panel { background: rgba(28, 28, 28, .81); color: #f0f0f0; border-radius: 7px; }
    .legend { width: 363px; padding-bottom: 4px; }
    .bar { display: flex; align-items: center; padding: 9px 0 0 10px; gap: 10px; color: #ddd; }
    .pick { display: flex; align-items: center; width: 199px; height: 19px; background: #2d2d2d; border: 1px solid #4b4b4b; border-radius: 3px; gap: 6px; padding-left: 4px; }
    .pick .chev { color: #ccc; }
    .pick option { color: #000; }
    table { border-collapse: collapse; table-layout: fixed; width: 100%; }
    th { text-align: left; font-weight: 700; padding: 0; height: 29px; padding-top: 9px; border-bottom: 1px solid #a0a0a0; white-space: nowrap; }
    th:first-child, .est td:first-child { padding-left: 10px; }
    td { padding: 0; height: 21px; line-height: 18px; white-space: nowrap; }
    .sw { display: inline-block; width: 9px; height: 9px; margin: 0 9px 0 13px; }
    .on { color: #009688; }
    .no { color: #777; }
    td button { display: flex; }
    .est th { height: 26px; padding-top: 5px; }
    .est td { height: 18px; line-height: 18px; }
    .est tbody::before { content: ""; display: block; height: 3px; }
    .gcode { width: 381px; padding: 9px 3px 8px 2px; margin: 0; list-style: none; display: grid; grid-template-columns: minmax(0, 1fr); }
    .gcode li { height: 18px; line-height: 17px; padding: 0 3px; display: flex; gap: 7px; border: 1px solid transparent; }
    .gcode .cur { border-color: #c0683a; }
    .ln { color: #dd7c4b; width: 51px; flex: none; }
    .cmd { color: #b4bc2b; margin-right: -3px; }
    .cmt { color: #9c9c9c; overflow: hidden; text-overflow: ellipsis; white-space: nowrap; }
    .code { white-space: nowrap; }
    .tip { position: absolute; background: #fff; color: #009688; border-radius: 3px; text-align: center; line-height: 16px; }
    .t1 { right: 34px; top: 95px; width: 46px; padding-right: 3px; }
    .t2 { right: 34px; top: 654px; width: 34px; }
    .t3 { left: 831px; top: 750px; width: 28px; line-height: 18px; }
    input[type="range"] { appearance: none; position: absolute; background: #009688; border: 4px solid #fff; box-sizing: content-box; border-radius: 8px; margin: 0; overflow: visible; }
    input[type="range"]::-webkit-slider-thumb { appearance: none; width: 15px; height: 15px; border-radius: 50%; background: #009688; border: 2px solid #fff; }
    .layers { writing-mode: vertical-lr; direction: rtl; width: 7px; height: 530px; right: 13px; top: 116px; }
    .moves { left: 222px; top: 751px; width: 600px; height: 7px; }
    .low, .plus { position: absolute; right: 13px; width: 15px; height: 15px; border-radius: 50%; background: #009688; border: 2px solid #fff; }
    .low { top: 646px; }
    .plus { top: 120px; background: none; border: 0; color: #fff; }
    .stack { position: absolute; right: 11px; top: 733px; }
  `];

  render() {
    return html`
      <svg class="scene" viewBox="500 70 1100 780" preserveAspectRatio="xMinYMin slice" role="img" aria-label="Sliced model on the build plate">${scene}</svg>
      <button class="toggle" aria-label="Collapse sidebar">${icon(16, I.fold)}</button>
      <div class="plate"><button aria-label="Plate 1"><span class="num">1</span>
        <svg viewBox="515 111 112 111" aria-hidden="true"><path fill="#12695f" d="M574 125q2 1 4 1l4 0 4-1v50l-5 6-7-6z"/><path fill="#1c8578" d="M574 125 577 126V176L574 174z"/><ellipse cx="579.500" cy="182" rx="11.500" ry="10" fill="#178073"/><path fill="#12695f" d="M574 165h12l-5 18z"/><path stroke="#fff" stroke-dasharray="4 8" d="M583.500 136v44"/><ellipse cx="560" cy="202" rx="11.500" ry="9.500" fill="#178073"/><path fill="none" stroke="#0d5d53" d="M551 197q9-7 18 0M550 203q10 7 20 0M554 207q6 4 12 0M571 178q9 6 17 0M570 186q9 5 18 0"/></svg>
      </button></div>

      <div class="side">
        <section class="panel legend">
          <div class="bar"><button aria-label="Collapse">${icon(15, I.collapse)}</button><button aria-label="Show G-code">${icon(17, I.code)}</button>
            <span class="pick">${chevron}<select aria-label="Color scheme"><option>Line Type</option></select></span></div>
          <table>
            <colgroup><col style="width:141px" /><col style="width:59px" /><col style="width:38px" /><col style="width:48px" /><col style="width:50px" /><col /></colgroup>
            <thead><tr><th>Line Type</th><th>Time</th><th>%</th><th colspan="3">Usage</th></tr></thead>
            <tbody>${LINES.map(([c, n, t, p, m, g], i) => html`<tr>
              <td><span class="sw" style=${styleMap({ background: c })}></span>${n}</td><td>${t}</td><td>${p}</td><td>${m}</td><td>${g}</td>
              <td><button class=${i < 13 ? "on" : "no"} aria-label="Toggle ${n}">${icon(15, i < 13 ? I.eye : I.eyeOff)}</button></td></tr>`)}</tbody>
          </table>
          <table class="est">
            <colgroup><col style="width:133px" /><col style="width:60px" /><col /></colgroup>
            <thead><tr><th colspan="3">Total estimation</th></tr></thead>
            <tbody>${TOTALS.map(([k, a, b]) => html`<tr><td>${k}</td><td>${a}</td><td>${b}</td></tr>`)}</tbody>
          </table>
        </section>
        <ol class="panel gcode">
          ${GCODE.map(([n, c, r]) => html`<li class=${classMap({ cur: n === "1549037" })}><span class="ln">${n}</span>${c ? html`<span class="cmd">${c}</span><span class="code">${r}</span>` : html`<span class="cmt">${r}</span>`}</li>`)}
        </ol>
      </div>

      <input class="layers" type="range" min="1" max="2438" .value=${String(this.top)} aria-label="Layer" />
      <span class="plus">${icon(15, svg`<path d="M8 4v8M4 8h8"/>`)}</span><span class="low"></span>
      <div class="tip t1">2438<br />195.16</div>
      <div class="tip t2">1<br />0.20</div>
      <input class="moves" type="range" min="1" max="398" value="398" aria-label="Move" />
      <div class="tip t3">398</div>
      <svg class="stack" width="36" height="36" viewBox="0 0 36 36" fill="#009688" stroke="#fff" stroke-width="2" stroke-linejoin="round" paint-order="stroke" aria-hidden="true"><path d="M2 25l5-2.500 11 5.500 11-5.500 5 2.500-16 8.500z"/><path d="M2 17l5-2.500L18 20l11-5.500 5 2.500-16 8.500z"/><path d="M18 1.500 34 9.500 18 17.500 2 9.500z"/></svg>`;
  }
}

@customElement("app-root")
class AppRoot extends LitElement {
  static styles = css`
    :host { display: flex; flex-direction: column; height: 100vh; font-family: Roboto, sans-serif; background: #cfcfcf; border-bottom: 1px solid #555; box-sizing: border-box; overflow: hidden; }
    main { flex: 1; display: flex; gap: 4px; min-height: 0; }
  `;
  render() {
    return html`<top-bars></top-bars><main><settings-panel></settings-panel><preview-canvas></preview-canvas></main>`;
  }
}
